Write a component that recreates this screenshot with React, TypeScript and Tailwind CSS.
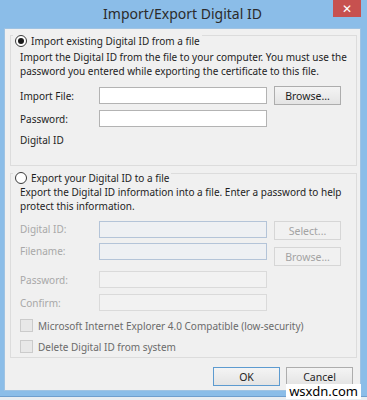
import React from 'react'

function Radio({ checked }: { checked?: boolean }) {
  return (
    <span className="flex h-[12px] w-[12px] items-center justify-center rounded-full border border-[#3a3a3a] bg-white">
      {checked && <span className="h-[6px] w-[6px] rounded-full bg-[#1a1a1a]" />}
    </span>
  )
}

function Field({ disabled, tint }: { disabled?: boolean; tint?: boolean }) {
  const cls = !disabled
    ? 'border-[#b3b3b3] bg-white'
    : tint
      ? 'border-[#b4c4d8] bg-[#eef0f3]'
      : 'border-[#dadada] bg-[#f2f2f2]'
  return <div className={`h-[17px] w-[168px] border ${cls}`} />
}

function Button({ label, disabled, primary, className = '' }: { label: string; disabled?: boolean; primary?: boolean; className?: string }) {
  const cls = disabled
    ? 'border-[#d6d6d6] bg-[#f1f1f1] text-[#a3a3a3]'
    : primary
      ? 'border-[#5d9bd0] bg-linear-to-b from-[#f4f4f4] to-[#e4e4e4] text-[#1e1e1e]'
      : 'border-[#adadad] bg-linear-to-b from-[#f4f4f4] to-[#e4e4e4] text-[#1e1e1e]'
  return (
    <div className={`flex h-[19px] w-[67px] items-center justify-center border text-[10.5px] leading-[12px] ${cls} ${className}`}>
      {label}
    </div>
  )
}

function Checkbox({ label }: { label: string }) {
  return (
    <div className="flex h-[13px] items-center gap-[5px]">
      <span className="h-[13px] w-[13px] border border-[#cbcbcb] bg-[#e8e8e8]" />
      <span className="text-[#6b6b6b]">{label}</span>
    </div>
  )
}

export default function App() {
  return (
    <div className="relative flex h-[400px] w-[367px] flex-col bg-[#8bbde8] font-['Noto_Sans',sans-serif] text-[10px] leading-[14px] text-[#1e1e1e]">
      {/* Title bar */}
      <div className="relative flex h-[28px] items-center justify-center">
        <span className="-ml-[2px] text-[14px] text-[#2b2b2b]">Import/Export Digital ID</span>
        <div className="absolute right-[6px] top-0 flex h-[17px] w-[28px] items-center justify-center bg-[#c7514f] text-[12px] leading-none text-white">
          ✕
        </div>
      </div>

      {/* Client area */}
      <div className="ml-[4px] mr-[6px] flex h-[363px] flex-col border border-[#9fc3e3] bg-[#f0f0f0]">
        {/* Import group */}
        <div className="ml-[5px] mr-[3px] mt-[6px] flex h-[131px] flex-col border border-[#dcdcdc]">
          <div className="-mt-[2px] ml-[2px] flex">
            <div className="flex items-center gap-[4px] bg-[#f0f0f0] px-[2px]">
              <Radio checked />
              <span>Import existing Digital ID from a file</span>
            </div>
          </div>
          <div className="ml-[9px] mt-[2px] w-[330px]">
            Import the Digital ID from the file to your computer. You must use the password you entered while exporting the certificate to this file.
          </div>
          <div className="ml-[9px] mt-[8px] flex items-center">
            <span className="w-[79px]">Import File:</span>
            <Field />
            <Button label="Browse..." className="ml-[7px]" />
          </div>
          <div className="ml-[9px] mt-[5px] flex items-center">
            <span className="w-[79px]">Password:</span>
            <Field />
          </div>
          <div className="ml-[9px] mt-[6px]">Digital ID</div>
        </div>

        {/* Export group */}
        <div className="ml-[5px] mr-[3px] mt-[7px] flex h-[185px] flex-col border border-[#dcdcdc]">
          <div className="-mt-[3px] ml-[2px] flex">
            <div className="flex items-center gap-[4px] bg-[#f0f0f0] px-[2px]">
              <Radio />
              <span>Export your Digital ID to a file</span>
            </div>
          </div>
          <div className="ml-[9px] w-[330px]">
            Export the Digital ID information into a file. Enter a password to help protect this information.
          </div>
          <div className="ml-[9px] mt-[8px] flex items-start text-[#a8a8a8]">
            <span className="w-[79px] leading-[17px]">Digital ID:</span>
            <Field disabled tint />
            <Button label="Select..." disabled className="ml-[7px]" />
          </div>
          <div className="ml-[9px] mt-[3px] flex items-start text-[#a8a8a8]">
            <span className="w-[79px] leading-[17px]">Filename:</span>
            <Field disabled tint />
            <Button label="Browse..." disabled className="ml-[7px] mt-[4px]" />
          </div>
          <div className="ml-[9px] mt-[5px] flex items-center text-[#a8a8a8]">
            <span className="w-[79px]">Password:</span>
            <Field disabled />
          </div>
          <div className="ml-[9px] mt-[6px] flex items-center text-[#a8a8a8]">
            <span className="w-[79px]">Confirm:</span>
            <Field disabled />
          </div>
          <div className="ml-[9px] mt-[8px]">
            <Checkbox label="Microsoft Internet Explorer 4.0 Compatible (low-security)" />
          </div>
          <div className="ml-[9px] mt-[8px]">
            <Checkbox label="Delete Digital ID from system" />
          </div>
        </div>

        {/* Buttons */}
        <div className="mr-[7px] mt-[9px] flex justify-end gap-[6px]">
          <Button label="OK" primary className="w-[65px]" />
          <Button label="Cancel" className="w-[63px]" />
        </div>
      </div>

      <div className="mt-[5px] h-[1px] bg-[#6f9fce]" />
      <div className="flex-1 bg-[#e9edf1]" />

      {/* watermark */}
      <div className="absolute bottom-[1px] right-[6px] bg-white px-[3px] text-[13px] leading-[15px] text-black">
        wsxdn.com
      </div>
    </div>
  )
}
